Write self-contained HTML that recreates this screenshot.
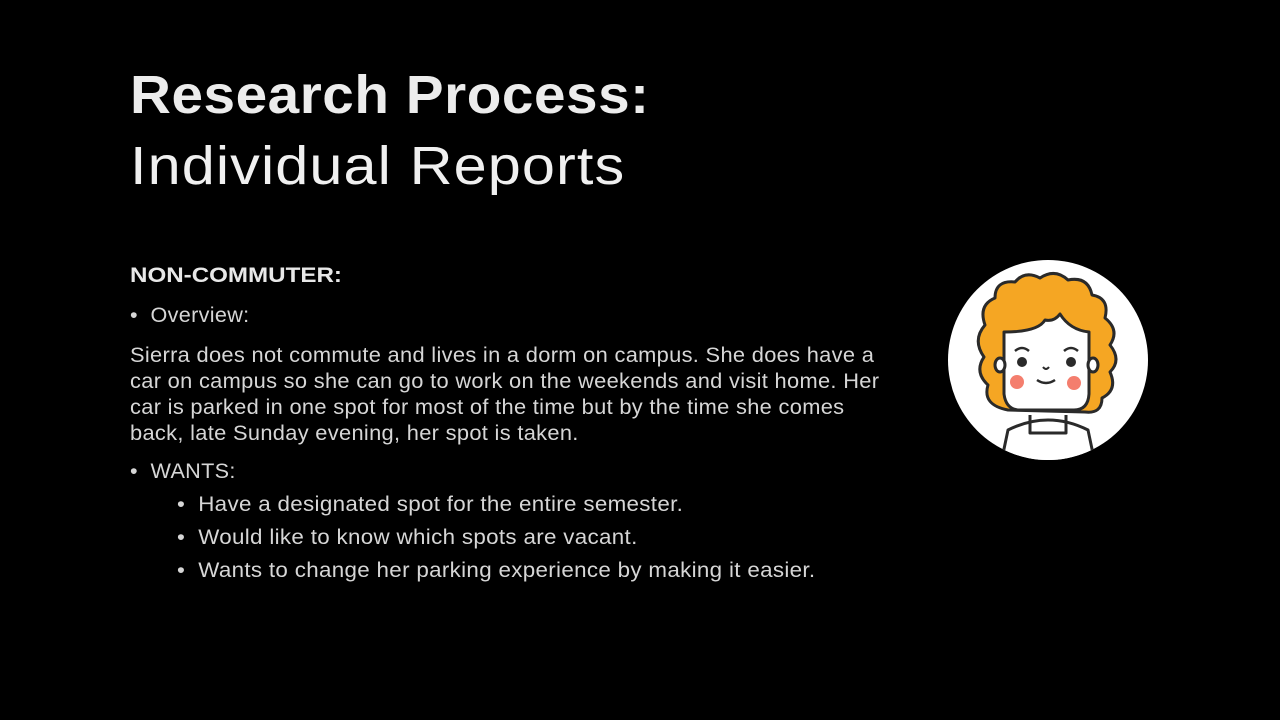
<!DOCTYPE html>
<html><head><style>
body{margin:0;background:#000;width:1280px;height:720px;overflow:hidden;position:relative;font-family:"Liberation Sans",sans-serif;color:#e6e6e6}
.t{position:absolute;white-space:nowrap;line-height:1;transform-origin:0 0}
.b{font-size:21px;color:#d6d6d6;letter-spacing:0.3px}
.p{transform:scaleX(1.04)}
.s{transform:scaleX(1.065)}
</style></head><body>
<div class="t" style="left:130px;top:68px;font-size:54px;font-weight:bold;color:#ececec;letter-spacing:0.5px;transform:scaleX(1.05)">Research Process:</div>
<div class="t" style="left:130px;top:139px;font-size:54px;color:#f0f0f0;letter-spacing:1px;transform:scaleX(1.1)">Individual Reports</div>
<div class="t" style="left:130px;top:265px;font-size:21px;font-weight:bold;color:#e8e8e8;transform:scaleX(1.15)">NON-COMMUTER:</div>
<div class="t b" style="left:130px;top:305px;transform:scaleX(1.03)">•&nbsp;&nbsp;Overview:</div>
<div class="t b p" style="left:130px;top:345px">Sierra does not commute and lives in a dorm on campus. She does have a</div>
<div class="t b p" style="left:130px;top:371px">car on campus so she can go to work on the weekends and visit home. Her</div>
<div class="t b p" style="left:130px;top:397px">car is parked in one spot for most of the time but by the time she comes</div>
<div class="t b p" style="left:130px;top:423px">back, late Sunday evening, her spot is taken.</div>
<div class="t b" style="left:130px;top:461px;transform:scaleX(1.03)">•&nbsp;&nbsp;WANTS:</div>
<div class="t b s" style="left:177px;top:494px">•&nbsp;&nbsp;Have a designated spot for the entire semester.</div>
<div class="t b s" style="left:177px;top:527px">•&nbsp;&nbsp;Would like to know which spots are vacant.</div>
<div class="t b s" style="left:177px;top:560px">•&nbsp;&nbsp;Wants to change her parking experience by making it easier.</div>
<svg style="position:absolute;left:0;top:0" width="1280" height="720">
<defs><clipPath id="c"><circle cx="1048" cy="360" r="100"/></clipPath></defs>
<circle cx="1048" cy="360" r="100" fill="#fff"/>
<g clip-path="url(#c)" stroke="#2a2a2a" stroke-width="3" stroke-linejoin="round">
<path d="M1000 468 L1008 430 Q1048 410 1088 430 L1096 468 Z" fill="#fff"/>
<path d="M1030 415 L1030 433 L1066 433 L1066 415" fill="none"/>
<path d="M1008 410 Q982 405 988 385 Q974 372 984 357 Q972 340 985 325 Q978 305 995 298 Q995 280 1015 282 Q1025 270 1040 278 Q1055 268 1068 280 Q1088 276 1092 295 Q1110 298 1105 318 Q1120 330 1110 345 Q1122 360 1110 372 Q1118 390 1102 398 Q1102 414 1085 412 L1008 410 Z" fill="#f5a623"/>
<path d="M1004 332 L1004 394 Q1006 410 1020 410 L1074 410 Q1088 410 1089 394 L1089 332 Q1070 330 1060 314 Q1054 322 1045 320 Q1038 332 1004 332 Z" fill="#fff"/>
<ellipse cx="1000" cy="365" rx="5" ry="7" fill="#fff"/>
<ellipse cx="1093" cy="365" rx="5" ry="7" fill="#fff"/>
</g>
<circle cx="1022" cy="362" r="5" fill="#2a2a2a"/>
<circle cx="1071" cy="362" r="5" fill="#2a2a2a"/>
<path d="M1015 351 Q1022 345 1029 351 M1064 351 Q1071 345 1078 351" stroke="#2a2a2a" stroke-width="2.5" fill="none"/>
<circle cx="1017" cy="382" r="7" fill="#f47e6e"/>
<circle cx="1074" cy="383" r="7" fill="#f47e6e"/>
<path d="M1037 380 Q1046 386 1055 380" stroke="#2a2a2a" stroke-width="2.5" fill="none"/>
<path d="M1043 367 Q1046 371 1049 367" stroke="#2a2a2a" stroke-width="2" fill="none"/>
</svg>
</body></html>
